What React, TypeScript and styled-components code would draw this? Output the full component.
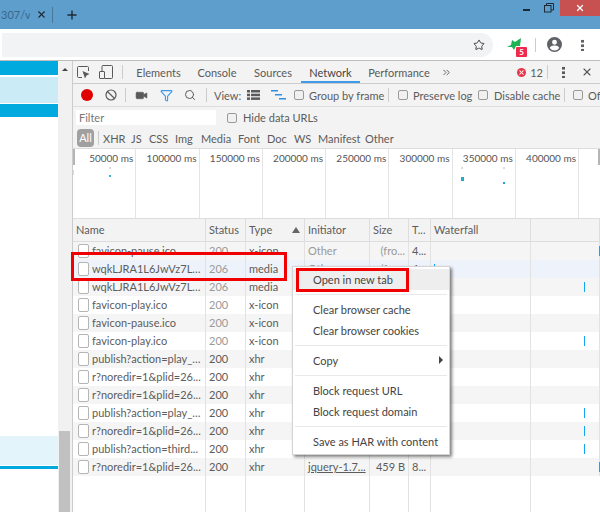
import React from "react";
import styled, { createGlobalStyle } from "styled-components";
import { Ban, ChevronsRight, Funnel, Plus, Search, Star, Video, X } from "lucide-react";

const GlobalStyle = createGlobalStyle`
  html, body {
    margin: 0;
    padding: 0;
    background: #fff;
  }
  * {
    box-sizing: border-box;
  }
`;

const Screen = styled.div`
  position: relative;
  width: 600px;
  height: 512px;
  overflow: hidden;
  display: flex;
  flex-direction: column;
  font-family: Lato, "Open Sans", sans-serif;
  font-size: 11px;
  color: #5c5c5c;
`;

const TitleBar = styled.div`
  height: 29px;
  flex: none;
  display: flex;
  align-items: flex-start;
  background: #5e9ecd;
`;

const TabTitle = styled.span`
  width: 30px;
  height: 29px;
  padding-left: 1px;
  overflow: hidden;
  white-space: nowrap;
  font-size: 11px;
  line-height: 29px;
  color: #38688c;
`;

const TabClose = styled.div`
  width: 22px;
  height: 29px;
  display: flex;
  align-items: center;
  justify-content: center;
  color: #1f2c36;
`;

const TabDivider = styled.div`
  width: 1px;
  height: 16px;
  margin-top: 7px;
  background: #47789c;
`;

const NewTab = styled.div`
  width: 38px;
  height: 29px;
  display: flex;
  align-items: center;
  justify-content: center;
  color: #1f2c36;
`;

const WindowControls = styled.div`
  margin-left: auto;
  display: flex;
  align-items: flex-start;
`;

const WindowButton = styled.div`
  width: 22px;
  height: 16px;
  display: flex;
  align-items: center;
  justify-content: center;
  color: #1d2a33;
`;

const CloseButton = styled.div`
  width: 40px;
  height: 16px;
  display: flex;
  align-items: center;
  justify-content: center;
  background: #c75050;
  color: #fff;
`;

const BrowserBar = styled.div`
  height: 32px;
  flex: none;
  display: flex;
  align-items: flex-start;
  padding: 4px 0 0 2px;
  background: #fff;
  border-bottom: 1px solid #bdbdbd;
`;

const Omnibox = styled.div`
  width: 491px;
  height: 24px;
  display: flex;
  align-items: center;
  justify-content: flex-end;
  padding-right: 8px;
  border-radius: 0 12px 12px 0;
  background: #f1f3f4;
  color: #444;
`;

const Extension = styled.div`
  position: relative;
  width: 20px;
  height: 19px;
  margin: 5px 0 0 14px;
`;

const Badge = styled.span`
  position: absolute;
  left: 9px;
  top: 9px;
  width: 11px;
  height: 10px;
  border-radius: 1px;
  background: #ee2a4e;
  color: #fff;
  font-size: 8px;
  font-weight: 700;
  line-height: 10px;
  text-align: center;
`;

const BarDivider = styled.div`
  width: 1px;
  height: 14px;
  margin: 5px 11px 0 8px;
  background: #ccc;
`;

const Avatar = styled.div`
  width: 15px;
  height: 15px;
  margin-top: 4px;
  color: #5f6368;
`;

const Kebab = styled.div<{ $left: number; $top: number; $color: string }>`
  width: 3px;
  height: 12px;
  margin: ${(p) => p.$top}px 0 0 ${(p) => p.$left}px;
  background-image: radial-gradient(circle, ${(p) => p.$color} 1.4px, transparent 1.6px);
  background-size: 3px 4.5px;
`;

const Main = styled.div`
  flex: 1;
  min-height: 0;
  display: flex;
`;

const PagePane = styled.div`
  width: 58px;
  flex: none;
  display: flex;
  flex-direction: column;
  background: #fff;
`;

const Band = styled.div<{ $h: number; $bg: string; $mt?: number }>`
  height: ${(p) => p.$h}px;
  margin-top: ${(p) => p.$mt ?? 0}px;
  background: ${(p) => p.$bg};
`;

const PageScroll = styled.div`
  width: 14px;
  flex: none;
  display: flex;
  flex-direction: column;
  background: #f1f1f1;
`;

const ScrollArrow = styled.div`
  width: 0;
  height: 0;
  margin: 7px 0 0 4px;
  border-left: 3px solid transparent;
  border-right: 3px solid transparent;
  border-bottom: 3px solid #444;
`;

const ScrollThumb = styled.div`
  height: 81px;
  margin: auto 2px 0 1px;
  background: #c1c1c1;
`;

const DevTools = styled.div`
  flex: 1;
  min-width: 0;
  display: flex;
  flex-direction: column;
  border-left: 1px solid #ccc;
  background: #f3f3f3;
`;

const TabStrip = styled.div`
  height: 23px;
  flex: none;
  display: flex;
  align-items: stretch;
  border-bottom: 1px solid #ccc;
`;

const ToolIcon = styled.div<{ $w: number; $ml?: number; $color?: string }>`
  width: ${(p) => p.$w}px;
  margin-left: ${(p) => p.$ml ?? 0}px;
  flex: none;
  display: flex;
  align-items: center;
  justify-content: center;
  color: ${(p) => p.$color ?? "#5a5a5a"};
`;

const VDivider = styled.div<{ $ml: number; $mr: number }>`
  width: 1px;
  height: 14px;
  flex: none;
  align-self: center;
  margin: 0 ${(p) => p.$mr}px 0 ${(p) => p.$ml}px;
  background: #ccc;
`;

const Tab = styled.div<{ $active?: boolean; $w: number }>`
  width: ${(p) => p.$w}px;
  text-align: center;
  line-height: 24px;
  white-space: nowrap;
  color: ${(p) => (p.$active ? "#444" : "#5a5a5a")};
  box-shadow: ${(p) => (p.$active ? "inset 0 -2px 0 #3f9be8" : "none")};
`;

const ErrorGroup = styled.div`
  margin-left: auto;
  display: flex;
  align-items: center;
  gap: 4px;
`;

const ErrorDot = styled.div`
  width: 9px;
  height: 9px;
  border-radius: 50%;
  background: #e5384a;
  display: flex;
  align-items: center;
  justify-content: center;
  color: #fff;
`;

const ToolRow = styled.div`
  height: 23px;
  flex: none;
  display: flex;
  align-items: center;
  overflow: hidden;
  border-bottom: 1px solid #ddd;
  white-space: nowrap;
`;

const RecordDot = styled.div`
  width: 12px;
  height: 12px;
  margin-left: 8px;
  flex: none;
  border-radius: 50%;
  background: #e00000;
`;

const Check = styled.div<{ $ml: number; $mr: number }>`
  width: 10px;
  height: 10px;
  flex: none;
  margin: 0 ${(p) => p.$mr}px 0 ${(p) => p.$ml}px;
  border: 1px solid #9a9a9a;
  border-radius: 2px;
  background: #f0f0f0;
`;

const Label = styled.span<{ $w?: number }>`
  flex: none;
  width: ${(p) => (p.$w ? `${p.$w}px` : "auto")};
`;

const FilterRow = styled.div`
  height: 21px;
  flex: none;
  display: flex;
  align-items: center;
  padding-left: 3px;
`;

const FilterInput = styled.div`
  width: 140px;
  height: 15px;
  padding-left: 3px;
  line-height: 15px;
  background: #fff;
  color: #777;
`;

const TypeRow = styled.div`
  height: 21px;
  flex: none;
  display: flex;
  align-items: center;
  padding-left: 4px;
  border-bottom: 1px solid #ddd;
`;

const AllButton = styled.div`
  width: 17px;
  height: 18px;
  border-radius: 4px;
  background: #a0a0a0;
  color: #fff;
  text-align: center;
  line-height: 18px;
`;

const TypeFilter = styled.span<{ $w: number }>`
  width: ${(p) => p.$w}px;
  flex: none;
  white-space: nowrap;
`;

const Overview = styled.div`
  position: relative;
  height: 70px;
  flex: none;
  display: grid;
  grid-template-columns: repeat(8, 63.25px) 1fr;
  background: #fff;
  border-bottom: 1px solid #ddd;
`;

const OverviewCell = styled.div`
  padding: 3px 2px 0 0;
  border-right: 1px solid #e4e4e4;
  text-align: right;
  font-size: 10px;
  line-height: 13px;
  white-space: nowrap;
  color: #555;
`;

const OverviewDots = styled.svg`
  position: absolute;
  left: 0;
  top: 0;
  width: 527px;
  height: 69px;
`;

const Table = styled.div`
  flex: 1;
  min-height: 0;
  display: flex;
  flex-direction: column;
  background: #fff;
`;

const COLUMNS = "133px 40px 59px 65px 39px 22px 100px 1fr";

const HeaderRow = styled.div`
  height: 23px;
  flex: none;
  display: grid;
  grid-template-columns: ${COLUMNS};
  background: #f3f3f3;
  border-bottom: 1px solid #ddd;
`;

const HeaderCell = styled.div<{ $flex?: boolean }>`
  display: ${(p) => (p.$flex ? "flex" : "block")};
  align-items: center;
  justify-content: space-between;
  padding: 0 4px 0 3px;
  border-right: 1px solid #ddd;
  line-height: 22px;
  white-space: nowrap;
  overflow: hidden;
`;

const SortArrow = styled.span`
  width: 0;
  height: 0;
  border-left: 4px solid transparent;
  border-right: 4px solid transparent;
  border-bottom: 6px solid #666;
`;

const Row = styled.div<{ $tone: string }>`
  position: relative;
  height: 18px;
  flex: none;
  display: grid;
  grid-template-columns: ${COLUMNS};
  background: ${(p) => p.$tone};
`;

const Cell = styled.div<{ $align?: string; $muted?: boolean; $link?: boolean }>`
  padding: 0 3px;
  border-right: 1px solid #e2e2e2;
  line-height: 18px;
  white-space: nowrap;
  overflow: hidden;
  text-align: ${(p) => p.$align ?? "left"};
  color: ${(p) => (p.$muted ? "#9a9a9a" : "#5c5c5c")};
  text-decoration: ${(p) => (p.$link ? "underline" : "none")};
`;

const NameCell = styled(Cell)`
  display: flex;
  align-items: center;
  gap: 3px;
  padding-left: 5px;
`;

const FileIcon = styled.span`
  width: 11px;
  height: 14px;
  flex: none;
  border: 1px solid #b5b5b5;
  border-radius: 2px;
  background: #fff;
`;

const NameText = styled.span`
  overflow: hidden;
  text-overflow: ellipsis;
`;

const Tick = styled.span<{ $x: number }>`
  position: absolute;
  left: ${(p) => p.$x}px;
  top: 4px;
  width: 1px;
  height: 10px;
  background: #12a5f0;
`;

const Filler = styled.div`
  flex: 1;
  display: grid;
  grid-template-columns: ${COLUMNS};
`;

const FillerCell = styled.div`
  border-right: 1px solid #e2e2e2;
`;

const Menu = styled.div`
  position: absolute;
  left: 292px;
  top: 266px;
  width: 158px;
  height: 189px;
  padding: 2px 0;
  background: #fff;
  border: 1px solid #d4d4d4;
  box-shadow: 2px 2px 3px rgba(0, 0, 0, 0.5);
  color: #444;
`;

const MenuItem = styled.div<{ $hover?: boolean }>`
  position: relative;
  height: 21px;
  padding-left: 20px;
  line-height: 21px;
  background: ${(p) => (p.$hover ? "#eeeeee" : "transparent")};
`;

const MenuLine = styled.div`
  height: 1px;
  margin: 4px 2px;
  background: #e8e8e8;
`;

const SubArrow = styled.span`
  position: absolute;
  right: 6px;
  top: 6px;
  width: 0;
  height: 0;
  border-top: 4px solid transparent;
  border-bottom: 4px solid transparent;
  border-left: 4px solid #444;
`;

const RedBox = styled.div<{ $x: number; $y: number; $w: number; $h: number }>`
  position: absolute;
  left: ${(p) => p.$x}px;
  top: ${(p) => p.$y}px;
  width: ${(p) => p.$w}px;
  height: ${(p) => p.$h}px;
  border: 3px solid #f00000;
`;

type Req = {
  name: string;
  status: string;
  type: string;
  initiator?: string;
  link?: boolean;
  size?: string;
  time?: string;
  ticks?: number[];
  tone?: string;
  muted?: boolean;
};

const PLID = "r?noredir=1&plid=26...";
const WQK = "wqkLJRA1L6JwVz7LS-j...";
const PLAY_S = "publish?action=play_s...";

const requests: Req[] = [
  { name: "favicon-pause.ico", status: "200", type: "x-icon", initiator: "Other", size: "(fro...", time: "4...", ticks: [526], muted: true },
  { name: WQK, status: "206", type: "media", initiator: "Other", size: "(fro...", time: "4...", ticks: [361], tone: "#eef3fb", muted: true },
  { name: WQK, status: "206", type: "media", ticks: [511], muted: true },
  { name: "favicon-play.ico", status: "200", type: "x-icon", muted: true },
  { name: "favicon-pause.ico", status: "200", type: "x-icon", muted: true },
  { name: "favicon-play.ico", status: "200", type: "x-icon", ticks: [511], muted: true },
  { name: PLAY_S, status: "200", type: "xhr" },
  { name: PLID, status: "200", type: "xhr" },
  { name: PLID, status: "200", type: "xhr" },
  { name: PLAY_S, status: "200", type: "xhr", ticks: [511] },
  { name: PLID, status: "200", type: "xhr", ticks: [511] },
  { name: "publish?action=third...", status: "200", type: "xhr", initiator: "jquery-1.7...", link: true, size: "459 B", time: "8...", ticks: [511] },
  { name: PLID, status: "200", type: "xhr", initiator: "jquery-1.7...", link: true, size: "459 B", time: "8...", ticks: [526] },
];

const marks = ["50000 ms", "100000 ms", "150000 ms", "200000 ms", "250000 ms", "300000 ms", "350000 ms", "400000 ms"];
const types: [string, number][] = [
  ["XHR", 28],
  ["JS", 18],
  ["CSS", 26],
  ["Img", 26],
  ["Media", 37],
  ["Font", 29],
  ["Doc", 27],
  ["WS", 24],
  ["Manifest", 47],
  ["Other", 30],
];

function App() {
  return (
    <Screen>
      <GlobalStyle />
      <TitleBar>
        <TabTitle>307/v</TabTitle>
        <TabClose>
          <X size={11} strokeWidth={2.4} />
        </TabClose>
        <TabDivider />
        <NewTab>
          <Plus size={14} strokeWidth={2.4} />
        </NewTab>
        <WindowControls>
          <WindowButton>
            <svg width="8" height="8" viewBox="0 0 8 8">
              <rect x="0" y="5" width="7" height="2" fill="currentColor" />
            </svg>
          </WindowButton>
          <WindowButton>
            <svg width="10" height="10" viewBox="0 0 10 10" fill="none" stroke="currentColor">
              <rect x="0.5" y="2.5" width="6.5" height="6.5" />
              <path d="M2.5 2.5V.5H9.5V7H7" />
            </svg>
          </WindowButton>
          <CloseButton>
            <X size={10} strokeWidth={3} />
          </CloseButton>
        </WindowControls>
      </TitleBar>

      <BrowserBar>
        <Omnibox>
          <Star size={12} strokeWidth={2} />
        </Omnibox>
        <Extension>
          <svg width="15" height="13" viewBox="0 0 15 13">
            <path d="M0 9 L4 7 L5 2 L8 4 L14 0 L13 8 L9 8 L7 12 L5 9 Z" fill="#1fb254" />
          </svg>
          <Badge>5</Badge>
        </Extension>
        <BarDivider />
        <Avatar>
          <svg width="15" height="15" viewBox="0 0 16 16">
            <path
              fillRule="evenodd"
              fill="currentColor"
              d="M8 0a8 8 0 1 0 0 16A8 8 0 0 0 8 0zm0 3a2.6 2.6 0 1 1 0 5.2A2.6 2.6 0 0 1 8 3zm0 11.4a6 6 0 0 1-5-2.7c0-1.7 3.3-2.6 5-2.6s5 .9 5 2.6a6 6 0 0 1-5 2.7z"
            />
          </svg>
        </Avatar>
        <Kebab $left={19} $top={6} $color="#5f6368" />
      </BrowserBar>

      <Main>
        <PagePane>
          <Band $h={14} $bg="#00a9de" />
          <Band $h={26} $mt={2} $bg="#cbecf6" />
          <Band $h={13} $mt={1} $bg="#00a9de" />
          <Band $h={29} $mt={319} $bg="#e3f4fa" />
          <Band $h={3} $mt={1} $bg="#00a9de" />
        </PagePane>
        <PageScroll>
          <ScrollArrow />
          <ScrollThumb />
        </PageScroll>

        <DevTools>
          <TabStrip>
            <ToolIcon $w={17} $ml={2}>
              <svg width="13" height="13" viewBox="0 0 13 13" fill="none" stroke="currentColor">
                <path d="M5 11.5H1.5a1 1 0 0 1-1-1V1.5a1 1 0 0 1 1-1h9a1 1 0 0 1 1 1V5" />
                <path d="M5.5 5 L12.5 8 L9.5 9.5 L8 12.5 Z" fill="currentColor" stroke="none" />
              </svg>
            </ToolIcon>
            <ToolIcon $w={15} $ml={6}>
              <svg width="14" height="14" viewBox="0 0 14 14" fill="none" stroke="currentColor">
                <rect x="0.5" y="6.5" width="5" height="7" rx="0.5" />
                <path d="M3 6.5V1.5a1 1 0 0 1 1-1h8.5a1 1 0 0 1 1 1V12.5a1 1 0 0 1-1 1H5.5" />
              </svg>
            </ToolIcon>
            <VDivider $ml={9} $mr={5} />
            <Tab $w={61}>Elements</Tab>
            <Tab $w={56}>Console</Tab>
            <Tab $w={56}>Sources</Tab>
            <Tab $w={59} $active>
              Network
            </Tab>
            <Tab $w={78}>Performance</Tab>
            <ToolIcon $w={12} $ml={2}>
              <ChevronsRight size={11} strokeWidth={2} />
            </ToolIcon>
            <ErrorGroup>
              <ErrorDot>
                <X size={7} strokeWidth={3.5} />
              </ErrorDot>
              <span>12</span>
            </ErrorGroup>
            <VDivider $ml={4} $mr={14} />
            <Kebab $left={0} $top={5} $color="#5a5a5a" />
            <ToolIcon $w={12} $ml={16} $color="#555">
              <X size={12} strokeWidth={2.2} />
            </ToolIcon>
            <ToolIcon $w={7} />
          </TabStrip>

          <ToolRow>
            <RecordDot />
            <ToolIcon $w={14} $ml={11}>
              <Ban size={12} strokeWidth={2.4} />
            </ToolIcon>
            <VDivider $ml={7} $mr={9} />
            <ToolIcon $w={13}>
              <Video size={13} fill="currentColor" strokeWidth={1} />
            </ToolIcon>
            <ToolIcon $w={14} $ml={11} $color="#3d97e6">
              <Funnel size={13} strokeWidth={2} />
            </ToolIcon>
            <ToolIcon $w={14} $ml={10}>
              <Search size={12} strokeWidth={2} />
            </ToolIcon>
            <VDivider $ml={9} $mr={7} />
            <Label $w={33}>View:</Label>
            <ToolIcon $w={13}>
              <svg width="13" height="10" viewBox="0 0 13 10" fill="currentColor">
                <rect x="0" y="0" width="3" height="2.5" />
                <rect x="4" y="0" width="9" height="2.5" />
                <rect x="0" y="3.7" width="3" height="2.5" />
                <rect x="4" y="3.7" width="9" height="2.5" />
                <rect x="0" y="7.4" width="3" height="2.5" />
                <rect x="4" y="7.4" width="9" height="2.5" />
              </svg>
            </ToolIcon>
            <ToolIcon $w={15} $ml={11}>
              <svg width="15" height="10" viewBox="0 0 15 10" fill="#2f8fe0">
                <rect x="0" y="0" width="7" height="1.5" />
                <rect x="4" y="4" width="7" height="1.5" />
                <rect x="8" y="8" width="7" height="1.5" />
              </svg>
            </ToolIcon>
            <Check $ml={8} $mr={5} />
            <Label $w={79}>Group by frame</Label>
            <VDivider $ml={0} $mr={9} />
            <Check $ml={0} $mr={5} />
            <Label $w={65}>Preserve log</Label>
            <Check $ml={0} $mr={6} />
            <Label $w={70}>Disable cache</Label>
            <VDivider $ml={0} $mr={8} />
            <Check $ml={0} $mr={5} />
            <Label>Offline</Label>
          </ToolRow>

          <FilterRow>
            <FilterInput>Filter</FilterInput>
            <Check $ml={11} $mr={6} />
            <Label>Hide data URLs</Label>
          </FilterRow>

          <TypeRow>
            <AllButton>All</AllButton>
            <VDivider $ml={4} $mr={4} />
            {types.map(([t, w]) => (
              <TypeFilter key={t} $w={w}>
                {t}
              </TypeFilter>
            ))}
          </TypeRow>

          <Overview>
            {marks.map((m) => (
              <OverviewCell key={m}>{m}</OverviewCell>
            ))}
            <OverviewDots viewBox="0 0 527 69">
              <rect x="0" y="0" width="2" height="16" fill="#b5b5b5" />
              <rect x="525" y="0" width="2" height="16" fill="#b5b5b5" />
              <rect x="0" y="21" width="1" height="5" fill="#bfe3f2" />
              <rect x="36" y="18" width="2" height="2" fill="#dcdcdc" />
              <rect x="36" y="26" width="2" height="2" fill="#39b0e6" />
              <rect x="388" y="18" width="2" height="2" fill="#dcdcdc" />
              <rect x="388" y="28" width="3" height="4" fill="#25a9c9" />
              <rect x="430" y="18" width="2" height="2" fill="#dcdcdc" />
              <rect x="430" y="33" width="2" height="2" fill="#25a9c9" />
            </OverviewDots>
          </Overview>

          <Table>
            <HeaderRow>
              <HeaderCell>Name</HeaderCell>
              <HeaderCell>Status</HeaderCell>
              <HeaderCell $flex>
                Type
                <SortArrow />
              </HeaderCell>
              <HeaderCell>Initiator</HeaderCell>
              <HeaderCell>Size</HeaderCell>
              <HeaderCell>T...</HeaderCell>
              <HeaderCell>Waterfall</HeaderCell>
              <HeaderCell />
            </HeaderRow>
            {requests.map((r, i) => (
              <Row key={i} $tone={r.tone ?? (i % 2 === 0 ? "#f5f5f5" : "#fff")}>
                <NameCell>
                  <FileIcon />
                  <NameText>{r.name}</NameText>
                </NameCell>
                <Cell $muted={r.muted}>{r.status}</Cell>
                <Cell>{r.type}</Cell>
                <Cell $muted={!r.link} $link={r.link}>
                  {r.initiator}
                </Cell>
                <Cell $align="right" $muted={!r.link}>
                  {r.size}
                </Cell>
                <Cell>{r.time}</Cell>
                <Cell />
                <Cell />
                {r.ticks?.map((x) => (
                  <Tick key={x} $x={x} />
                ))}
              </Row>
            ))}
            <Filler>
              {[0, 1, 2, 3, 4, 5, 6].map((c) => (
                <FillerCell key={c} />
              ))}
            </Filler>
          </Table>
        </DevTools>
      </Main>

      <Menu>
        <MenuItem $hover>Open in new tab</MenuItem>
        <MenuLine />
        <MenuItem>Clear browser cache</MenuItem>
        <MenuItem>Clear browser cookies</MenuItem>
        <MenuLine />
        <MenuItem>
          Copy
          <SubArrow />
        </MenuItem>
        <MenuLine />
        <MenuItem>Block request URL</MenuItem>
        <MenuItem>Block request domain</MenuItem>
        <MenuLine />
        <MenuItem>Save as HAR with content</MenuItem>
      </Menu>

      <RedBox $x={71} $y={252} $w={216} $h={29} />
      <RedBox $x={296} $y={268} $w={113} $h={24} />
    </Screen>
  );
}

export default App;
